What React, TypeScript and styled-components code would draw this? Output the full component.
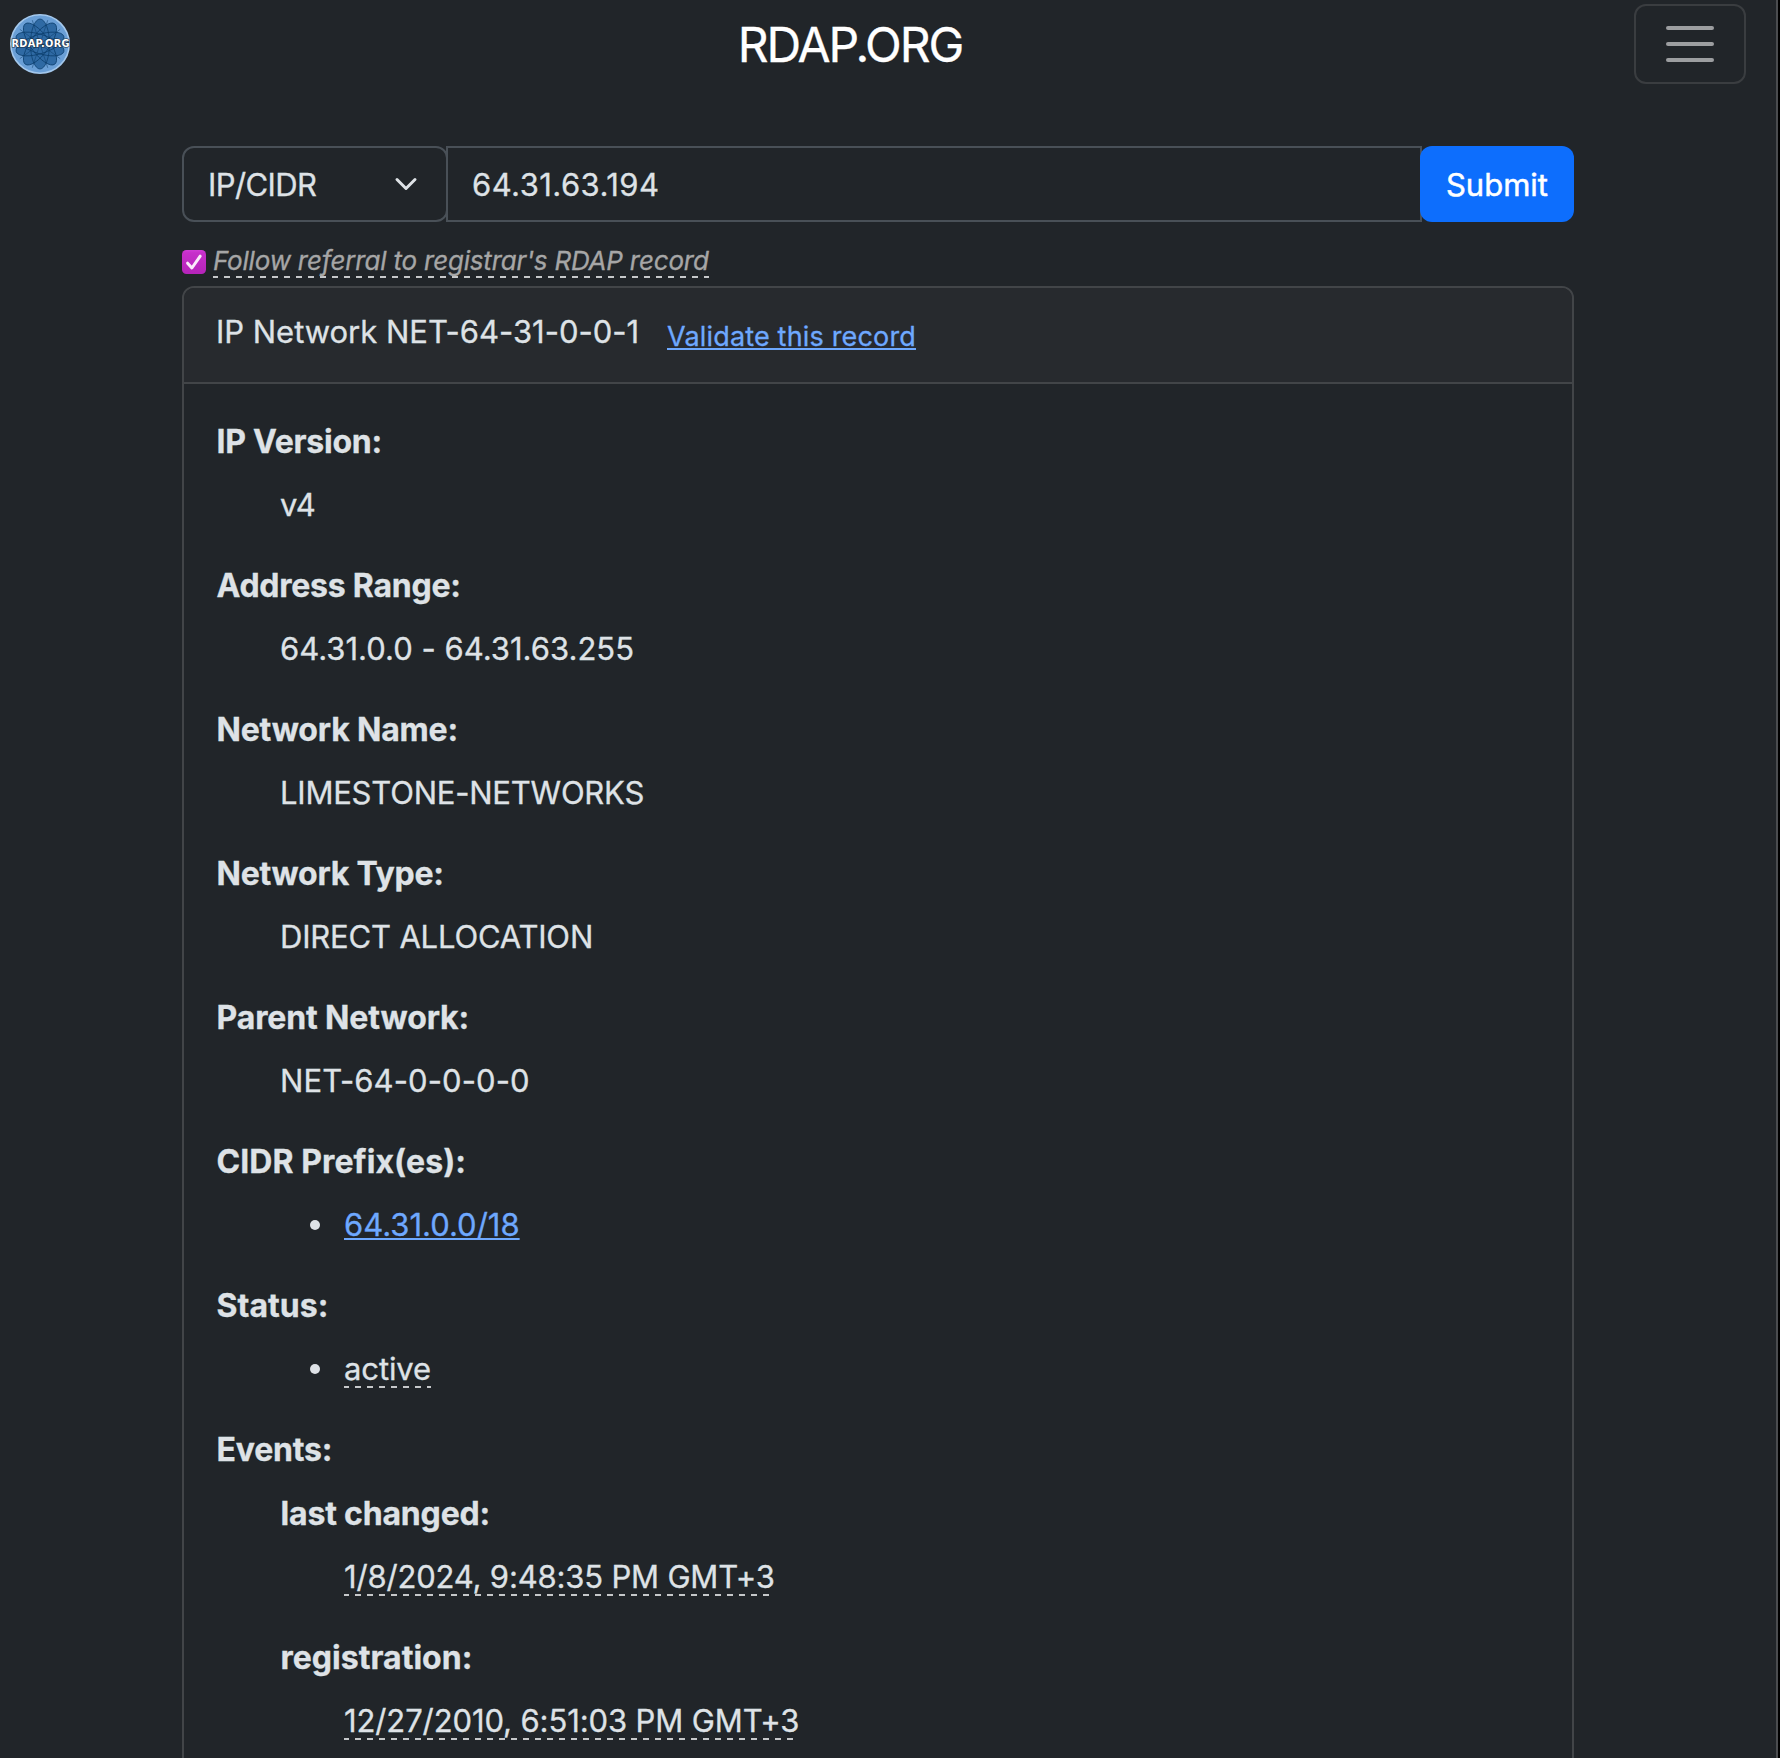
import React from "react";
import styled, { createGlobalStyle, css } from "styled-components";

const SANS = `"Inter", "Liberation Sans", sans-serif`;

const GlobalStyle = createGlobalStyle`
  *, *::before, *::after { box-sizing: border-box; }
  html, body { margin: 0; background: #000; }
  body {
    height: 1758px;
    overflow: hidden;
    font-family: ${SANS};
    font-size: 31px;
    font-weight: 400;
    line-height: 48px;
    color: #dee2e6;
    -webkit-text-stroke: 0.3px currentColor;
  }
`;

const dashedUnderline = css`
  padding-bottom: 2px;
  background: linear-gradient(90deg, #c6c8ca 6px, transparent 6px) -1px 100% / 12px 2px repeat-x;
`;

const Page = styled.div`
  width: 1778px;
  height: 1758px;
  overflow: hidden;
  background: #212529;
  border-right: 2px solid #4b4d50;
`;

const Navbar = styled.header`
  display: flex;
  align-items: center;
  justify-content: space-between;
  height: 88px;
  padding: 0 30px 0 10px;
`;

const Logo = styled.svg`
  display: block;
  width: 60px;
  height: 60px;
  -webkit-text-stroke: 0;
`;

const Brand = styled.h1`
  margin: 1px 4px 0 0;
  font-size: 48px;
  font-weight: 400;
  line-height: 58px;
  letter-spacing: -2.1px;
  color: #fff;
`;

const MenuButton = styled.button`
  display: flex;
  flex-direction: column;
  align-items: center;
  justify-content: center;
  gap: 12px;
  width: 112px;
  height: 80px;
  padding: 0;
  border: 2px solid #3a3d40;
  border-radius: 12px;
  background: transparent;
`;

const MenuBar = styled.span`
  width: 48px;
  height: 4px;
  border-radius: 2px;
  background: #9c9ea0;
`;

const Main = styled.main`
  width: 1392px;
  margin: 58px 0 0 182px;
`;

const SearchForm = styled.form`
  display: flex;
  height: 76px;
`;

const TypeSelect = styled.div`
  display: flex;
  align-items: center;
  justify-content: space-between;
  width: 266px;
  padding: 0 24px;
  border: 2px solid #495057;
  border-radius: 12px;
  letter-spacing: -0.6px;
`;

const Nudged = styled.span`
  padding-top: 2px;
`;

const Chevron = styled.svg`
  width: 32px;
  height: 24px;
`;

const QueryInput = styled.input`
  flex: 1;
  min-width: 0;
  z-index: 1;
  margin-left: -2px;
  padding: 2px 24px 0;
  border: 2px solid #495057;
  border-radius: 0;
  outline: none;
  background: #212529;
  color: #dee2e6;
  font: 400 31px/48px ${SANS};
  letter-spacing: 0.45px;
`;

const SubmitButton = styled.button`
  z-index: 2;
  width: 154px;
  margin-left: -2px;
  padding: 2px 0 0;
  border: 0;
  border-radius: 12px;
  background: #0d6efd;
  color: #fff;
  font: 400 31px/48px ${SANS};
  -webkit-text-stroke: 0.5px #fff;
`;

const ReferralRow = styled.label`
  display: flex;
  align-items: center;
  gap: 7px;
  height: 64px;
  padding-top: 16px;
`;

const Checkbox = styled.svg`
  display: block;
  width: 24px;
  height: 24px;
`;

const ReferralText = styled.em`
  ${dashedUnderline}
  margin-bottom: 1px;
  font-size: 26px;
  line-height: 31px;
  letter-spacing: -0.2px;
  color: #a6a6a6;
`;

const Card = styled.section`
  height: 1500px;
  border: 2px solid #424548;
  border-radius: 12px;
`;

const CardHeader = styled.div`
  display: flex;
  align-items: flex-start;
  height: 96px;
  padding: 20px 32px 0;
  border-bottom: 2px solid #424548;
  border-radius: 10px 10px 0 0;
  background: #272a2e;
`;

const CardTitle = styled.span`
  width: 425px;
  white-space: nowrap;
  letter-spacing: -0.02px;
`;

const Link = styled.a<{ $small?: boolean }>`
  color: #6ea8fe;
  text-decoration: underline;
  text-decoration-thickness: 2px;
  text-underline-offset: 2px;
  ${({ $small }) =>
    $small &&
    `margin: 12px 0 0 26px;
     font-size: 27px;
     line-height: 33px;
     letter-spacing: 0.17px;`}
`;

const Record = styled.dl`
  margin: 0;
`;

const CardBody = styled.div`
  padding: 33px 32px 0;
`;

const Term = styled.dt<{ $track?: number }>`
  margin-bottom: 14px;
  padding-left: 0.5px;
  font-size: 32px;
  font-weight: 700;
  line-height: 50px;
  white-space: nowrap;
  letter-spacing: ${({ $track = -0.18 }) => $track}px;
`;

const Value = styled.dd<{ $track?: number }>`
  margin: 0 0 32px;
  padding-left: 64px;
  white-space: nowrap;
  letter-spacing: ${({ $track = 0 }) => $track}px;
`;

const List = styled.ul`
  margin: 0;
  padding: 0;
  list-style: none;
`;

const Item = styled.li`
  display: flex;
  align-items: center;
  height: 48px;

  &::before {
    content: "";
    width: 10px;
    height: 10px;
    margin: 0 24px 0 30px;
    border-radius: 50%;
    background: #dee2e6;
  }
`;

const Hint = styled.span`
  ${dashedUnderline}
  display: inline-block;
  line-height: 34px;

  ${Item} & {
    margin-top: 2px;
  }
`;

function RdapLogo() {
  const petals = [0, 36, 72, 108, 144];
  return (
    <Logo viewBox="0 0 60 60">
      <circle cx="30" cy="30" r="29.2" fill="#6a9fd6" stroke="#a4c8ec" strokeWidth="1.6" />
      {petals.map((a) => (
        <ellipse key={a} cx="30" cy="30" rx="9.5" ry="25" fill="#2f6aa4" transform={`rotate(${a} 30 30)`} />
      ))}
      <g fill="none" stroke="#0c406f" strokeWidth="0.8">
        {petals.map((a) => (
          <ellipse key={a} cx="30" cy="30" rx="9.5" ry="25" transform={`rotate(${a} 30 30)`} />
        ))}
        {petals.map((a) => (
          <path key={a} d="M30 5V55" strokeWidth="0.5" transform={`rotate(${a + 18} 30 30)`} />
        ))}
      </g>
      <text
        x="30.5"
        y="33.4"
        textAnchor="middle"
        textLength="58"
        fontFamily='"DejaVu Sans", sans-serif'
        fontWeight="700"
        fontSize="9.8"
        fill="#fff"
        stroke="#1a2a3a"
        strokeWidth="1.2"
        paintOrder="stroke"
      >
        RDAP.ORG
      </text>
    </Logo>
  );
}

type Field = { term: string; value: React.ReactNode; termTrack?: number; track?: number };

const fields: Field[] = [
  { term: "IP Version:", value: "v4", termTrack: -0.25, track: -1.6 },
  { term: "Address Range:", value: "64.31.0.0 - 64.31.63.255", termTrack: -0.24, track: 0.01 },
  { term: "Network Name:", value: "LIMESTONE-NETWORKS", track: -0.22 },
  { term: "Network Type:", value: "DIRECT ALLOCATION", termTrack: -0.24, track: -0.18 },
  { term: "Parent Network:", value: "NET-64-0-0-0-0", termTrack: -0.12, track: 0.08 },
  {
    term: "CIDR Prefix(es):",
    termTrack: 0.08,
    track: 0,
    value: (
      <List>
        <Item>
          <Link>64.31.0.0/18</Link>
        </Item>
      </List>
    ),
  },
  {
    term: "Status:",
    termTrack: 0.05,
    track: -0.12,
    value: (
      <List>
        <Item>
          <Hint>active</Hint>
        </Item>
      </List>
    ),
  },
];

const events: Field[] = [
  { term: "last changed:", value: "1/8/2024, 9:48:35 PM GMT+3", track: -0.18 },
  { term: "registration:", value: "12/27/2010, 6:51:03 PM GMT+3", termTrack: 0.02, track: -0.11 },
];

export default function App() {
  return (
    <>
      <GlobalStyle />
      <Page>
        <Navbar>
          <RdapLogo />
          <Brand>RDAP.ORG</Brand>
          <MenuButton aria-label="Menu">
            <MenuBar />
            <MenuBar />
            <MenuBar />
          </MenuButton>
        </Navbar>
        <Main>
          <SearchForm onSubmit={(e) => e.preventDefault()}>
            <TypeSelect>
              <Nudged>IP/CIDR</Nudged>
              <Chevron viewBox="-2.667 0 21.333 16">
                <path
                  d="m2 5 6 6 6-6"
                  fill="none"
                  stroke="#dee2e6"
                  strokeWidth="2"
                  strokeLinecap="round"
                  strokeLinejoin="round"
                />
              </Chevron>
            </TypeSelect>
            <QueryInput defaultValue="64.31.63.194" />
            <SubmitButton>Submit</SubmitButton>
          </SearchForm>
          <ReferralRow>
            <Checkbox viewBox="0 0 24 24">
              <defs>
                <linearGradient id="check-fill" x1="0" y1="0" x2="0" y2="1">
                  <stop offset="0" stopColor="#d03bd6" />
                  <stop offset="0.12" stopColor="#c62fca" />
                  <stop offset="1" stopColor="#b524b9" />
                </linearGradient>
              </defs>
              <rect width="24" height="24" rx="4.5" fill="url(#check-fill)" />
              <path
                d="M5.6 13.2 9.9 18 18.2 6.2"
                fill="none"
                stroke="#fbeafb"
                strokeWidth="3"
                strokeLinecap="round"
                strokeLinejoin="round"
              />
            </Checkbox>
            <ReferralText>Follow referral to registrar's RDAP record</ReferralText>
          </ReferralRow>
          <Card>
            <CardHeader>
              <CardTitle>IP Network NET-64-31-0-0-1</CardTitle>
              <Link $small>Validate this record</Link>
            </CardHeader>
            <CardBody>
              <Record>
                {fields.map((f) => (
                  <React.Fragment key={f.term}>
                    <Term $track={f.termTrack}>{f.term}</Term>
                    <Value $track={f.track}>{f.value}</Value>
                  </React.Fragment>
                ))}
                <Term>Events:</Term>
                <Value>
                  <Record>
                    {events.map((f) => (
                      <React.Fragment key={f.term}>
                        <Term $track={f.termTrack}>{f.term}</Term>
                        <Value $track={f.track}>
                          <Hint>{f.value}</Hint>
                        </Value>
                      </React.Fragment>
                    ))}
                  </Record>
                </Value>
              </Record>
            </CardBody>
          </Card>
        </Main>
      </Page>
    </>
  );
}
